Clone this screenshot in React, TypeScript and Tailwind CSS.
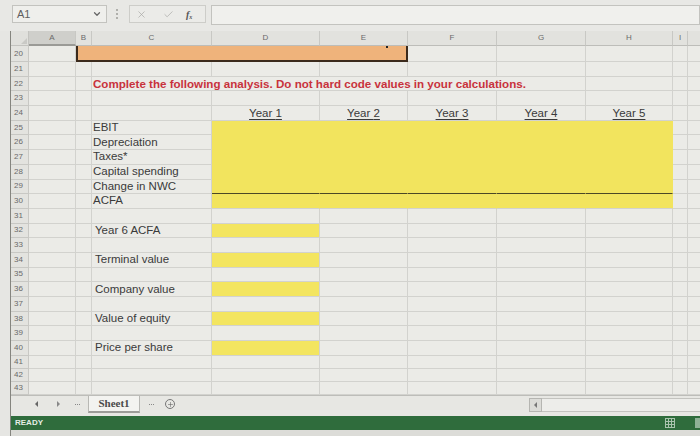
import { Check, ChevronDown, X, Plus } from "lucide-react";

const COLS = [
  { id: "A", w: "w-[47px]" },
  { id: "B", w: "w-[16px]" },
  { id: "C", w: "w-[120px]" },
  { id: "D", w: "w-[108px]" },
  { id: "E", w: "w-[88px]" },
  { id: "F", w: "w-[89px]" },
  { id: "G", w: "w-[89px]" },
  { id: "H", w: "w-[87px]" },
  { id: "I", w: "w-[15px]" },
];

const YEAR_COLS = ["D", "E", "F", "G", "H"];

const BLOCK: Record<number, string> = {
  25: "EBIT",
  26: "Depreciation",
  27: "Taxes*",
  28: "Capital spending",
  29: "Change in NWC",
  30: "ACFA",
};

const SINGLE: Record<number, string> = {
  32: "Year 6 ACFA",
  34: "Terminal value",
  36: "Company value",
  38: "Value of equity",
  40: "Price per share",
};

const cell = "shrink-0 h-full border-r border-b border-[#d2d2ce] bg-[#ebebe7]";
const label = "text-[11.5px] leading-none text-[#3a3a3a] whitespace-nowrap";

function RowNum({ n }: { n: number }) {
  return (
    <div className="w-[18px] shrink-0 h-full flex items-center pl-[3px] border-r border-b border-[#c8c8c4] bg-[#e3e3df] text-[8px] text-[#6a6a6a]">
      {n}
    </div>
  );
}

function Tail() {
  return (
    <>
      <div className={`${cell} w-[15px]`} />
      <div className="flex-1 h-full border-b border-[#d2d2ce] bg-[#ebebe7]" />
    </>
  );
}

function Dots() {
  return (
    <span className="flex gap-[1px] mb-[2px]">
      <span className="w-[1px] h-[1px] bg-[#888]" />
      <span className="w-[1px] h-[1px] bg-[#888]" />
      <span className="w-[1px] h-[1px] bg-[#888]" />
    </span>
  );
}

function GridRow({ n }: { n: number }) {
  const h = n === 20 ? "h-[16px]" : n <= 40 ? "h-[14.7px]" : "h-[13px]";

  if (n === 20) {
    return (
      <div className={`flex ${h}`}>
        <RowNum n={n} />
        <div className={`${cell} w-[47px]`} />
        <div className="relative shrink-0 w-[332px] h-full bg-[#efb37b] border-l-2 border-r-2 border-b-2 border-[#3b2a1c]">
          <div className="absolute right-[18px] top-0 w-[2px] h-[2px] bg-[#222]" />
        </div>
        <div className={`${cell} w-[89px]`} />
        <div className={`${cell} w-[89px]`} />
        <div className={`${cell} w-[87px]`} />
        <Tail />
      </div>
    );
  }

  if (n === 22) {
    return (
      <div className={`flex ${h}`}>
        <RowNum n={n} />
        <div className={`${cell} w-[47px]`} />
        <div className={`${cell} w-[16px]`} />
        <div className={`${cell} w-[494px] flex items-end pb-[1px] pl-[1px]`}>
          <span className="text-[11.6px] leading-none font-bold text-[#c8323c] whitespace-nowrap">
            Complete the following analysis. Do not hard code values in your calculations.
          </span>
        </div>
        <div className={`${cell} w-[87px]`} />
        <Tail />
      </div>
    );
  }

  return (
    <div className={`flex ${h}`}>
      <RowNum n={n} />
      {COLS.slice(0, 8).map((c) => {
        if (c.id === "C" && (BLOCK[n] || SINGLE[n])) {
          return (
            <div
              key={c.id}
              className={`${cell} ${c.w} flex items-end pb-[1px] ${SINGLE[n] ? "pl-[3px]" : "pl-[1px]"}`}
            >
              <span className={label}>{BLOCK[n] ?? SINGLE[n]}</span>
            </div>
          );
        }
        if (n === 24 && YEAR_COLS.includes(c.id)) {
          return (
            <div key={c.id} className={`${cell} ${c.w} flex items-end justify-center`}>
              <span className={`${label} underline underline-offset-[2px]`}>
                Year {YEAR_COLS.indexOf(c.id) + 1}
              </span>
            </div>
          );
        }
        if (BLOCK[n] && YEAR_COLS.includes(c.id)) {
          const bottom =
            n === 29 ? "border-b-[1.5px] border-b-[#4b4826]" : n === 30 ? "border-b-[#d2d2ce]" : "border-b-[#f2e45e]";
          return (
            <div
              key={c.id}
              className={`shrink-0 h-full ${c.w} bg-[#f2e45e] border-r border-b border-r-[#f2e45e] ${bottom}`}
            />
          );
        }
        if (SINGLE[n] && c.id === "D") {
          return <div key={c.id} className={`${cell} ${c.w} bg-[#f3e560]`} />;
        }
        return <div key={c.id} className={`${cell} ${c.w}`} />;
      })}
      <Tail />
    </div>
  );
}

export default function App() {
  const rows = Array.from({ length: 24 }, (_, i) => 20 + i);

  return (
    <div className="w-[700px] h-[436px] overflow-hidden bg-[#e6e6e3] font-['Liberation_Sans',Arial,sans-serif]">
      {/* toolbar */}
      <div className="h-[31px] flex items-start pt-[5px] bg-[#e8e8e5]">
        <div className="ml-[12px] w-[95px] h-[18px] flex items-center justify-between px-[4px] bg-[#efefec] border border-[#c3c3bf]">
          <span className="text-[11px] text-[#5f5f5f]">A1</span>
          <ChevronDown size={10} strokeWidth={3} className="text-[#666]" />
        </div>
        <div className="ml-[9px] mt-[4px] flex flex-col gap-[2px]">
          <div className="w-[2px] h-[2px] bg-[#b0b0ac]" />
          <div className="w-[2px] h-[2px] bg-[#b0b0ac]" />
          <div className="w-[2px] h-[2px] bg-[#b0b0ac]" />
        </div>
        <div className="ml-[11px] w-[77px] h-[18px] flex items-center bg-[#ebebe8] border border-[#cdcdc9]">
          <X size={11} strokeWidth={1.5} className="ml-[6px] text-[#a8a8a4]" />
          <Check size={11} strokeWidth={1.5} className="ml-[16px] text-[#a8a8a4]" />
          <span className="ml-[12px] text-[10px] italic font-bold font-['Liberation_Serif',serif] text-[#555]">
            f<sub className="text-[6px]">x</sub>
          </span>
        </div>
        <div className="ml-[5px] flex-1 h-[20px] bg-[#f0f0ed] border border-[#c3c3bf]" />
      </div>

      <div className="ml-[10px] border-l border-[#85857f]">
        {/* column headers */}
        <div className="flex h-[15px]">
          <div className="w-[18px] shrink-0 h-full relative border-r border-b border-[#c3c3bf] bg-[#e0e0dc]">
            <div className="absolute right-[1px] bottom-[1px] w-0 h-0 border-l-[6px] border-l-transparent border-b-[6px] border-b-[#c9c9c5]" />
          </div>
          {COLS.map((c) => (
            <div
              key={c.id}
              className={`shrink-0 h-full ${c.w} flex items-center justify-center text-[8px] text-[#6a6a6a] border-r border-[#c8c8c4] ${
                c.id === "A" ? "bg-[#cfcfcb] border-b-2 border-b-[#9a9a96]" : "bg-[#e2e2de] border-b border-b-[#bdbdb9]"
              }`}
            >
              {c.id}
            </div>
          ))}
          <div className="flex-1 h-full bg-[#e2e2de] border-b border-[#bdbdb9]" />
        </div>

        {rows.map((n) => (
          <GridRow key={n} n={n} />
        ))}

        {/* sheet tabs + scroll */}
        <div className="h-[21px] flex items-start border-t border-[#bdbdb9] bg-[#e7e7e3]">
          <div className="w-[518px] shrink-0 h-full flex items-center">
            <span className="ml-[24px] mb-[3px] w-0 h-0 border-y-[3px] border-y-transparent border-r-[3px] border-r-[#666]" />
            <span className="ml-[19px] mb-[3px] w-0 h-0 border-y-[3px] border-y-transparent border-l-[3px] border-l-[#888]" />
            <span className="ml-[15px]">
              <Dots />
            </span>
            <div className="ml-[8px] self-start w-[52px] h-[17px] flex items-center justify-center bg-[#f3f3f0] border-x border-b-2 border-[#b8b8b4] border-b-[#9c9c98]">
              <span className="text-[11px] font-bold font-['Liberation_Serif',serif] text-[#4a4a4a]">Sheet1</span>
            </div>
            <span className="ml-[9px]">
              <Dots />
            </span>
            <div className="ml-[11px] mb-[3px] w-[10px] h-[10px] rounded-full border border-[#777] flex items-center justify-center">
              <Plus size={7} strokeWidth={2} className="text-[#666]" />
            </div>
          </div>
          <div className="flex-1 h-full flex items-start pt-[2px]">
            <div className="w-[13px] h-[14px] flex items-center justify-center border border-[#b5b5b1] bg-[#dcdcd8]">
              <span className="w-0 h-0 border-y-[3px] border-y-transparent border-r-[3px] border-r-[#777]" />
            </div>
            <div className="flex-1 h-[14px] border-y border-[#c3c3bf] bg-[#ededea]" />
          </div>
        </div>

        {/* status bar */}
        <div className="h-[14px] flex items-center bg-[#2f6c3c]">
          <span className="ml-[4px] text-[8px] font-bold text-[#e6eee6]">READY</span>
          <div className="ml-auto mr-[20px] w-[10px] h-[10px] grid grid-cols-3 gap-[1px] p-[1px] bg-[#a9c3ad]">
            <div className="bg-[#2f6c3c]" />
            <div className="bg-[#2f6c3c]" />
            <div className="bg-[#2f6c3c]" />
            <div className="bg-[#2f6c3c]" />
            <div className="bg-[#2f6c3c]" />
            <div className="bg-[#2f6c3c]" />
            <div className="bg-[#2f6c3c]" />
            <div className="bg-[#2f6c3c]" />
            <div className="bg-[#2f6c3c]" />
          </div>
          <div className="w-[5px] h-[10px] bg-[#8fb196]" />
        </div>
        <div className="h-[10px] bg-[#dcdcd8]" />
      </div>
    </div>
  );
}
